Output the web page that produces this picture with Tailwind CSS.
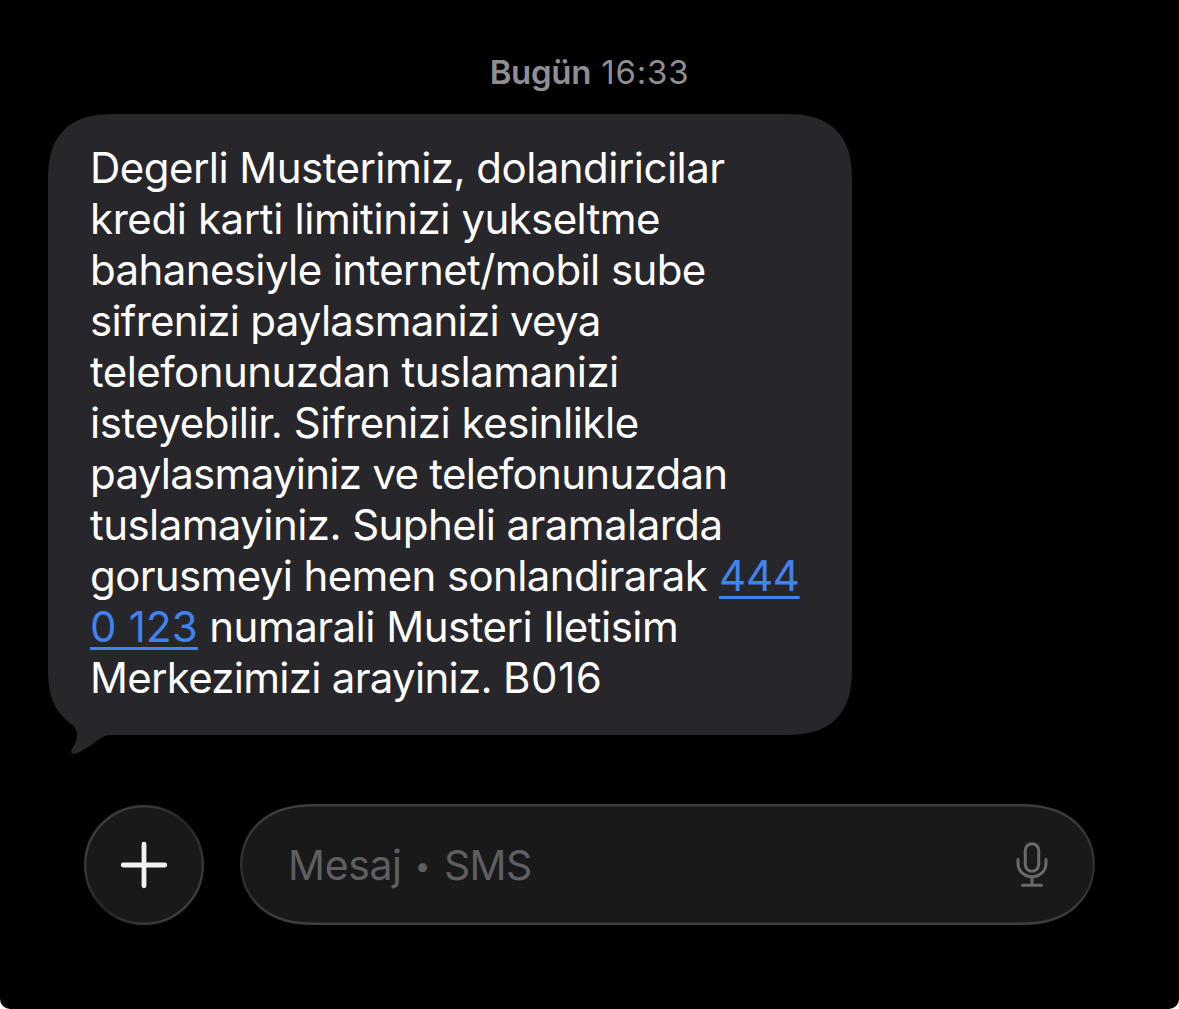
<!DOCTYPE html>
<html lang="tr">
<head>
    <meta charset="UTF-8">
    <meta name="viewport" content="width=device-width, initial-scale=1.0">
    <title>Mesajlar</title>
    <script src="https://cdn.jsdelivr.net/npm/@tailwindcss/browser@4"></script>
</head>
<body class="bg-white font-['Inter',sans-serif]">

    <div class="bg-black w-[1179px] h-[1009px] rounded-b-[10px] overflow-hidden flex flex-col">

        <!-- Date header -->
        <p class="mt-[51px] h-[43px] leading-[42px] text-[33px] text-[#8e8e93] flex justify-center gap-[10px] whitespace-nowrap">
            <span class="font-semibold tracking-[-0.3px]">Bugün</span>
            <span class="tracking-[0.8px]">16:33</span>
        </p>

        <!-- Message bubble -->
        <div class="relative ml-12 mt-5 w-[804px] h-[621px] pt-7 pl-[42px]">
            <svg class="absolute left-0 top-0" width="804" height="642" viewBox="0 0 804 642" fill="#27262b">
                <path d="M66 0H738C760 0 776 4 788 16C800 28 804 44 804 66V555C804 577 800 593 788 605C776 617 760 621 738 621H63C56 621 50 626 44 630.5C37 635 31 639 26 640C23 640 22 637 24 635C29 628 32 618 24.5 611C7 598 0 584 0 555V66C0 44 4 28 16 16C28 4 44 0 66 0Z"/>
            </svg>
            <div class="relative text-[42px] leading-[51px] text-white whitespace-nowrap">
                <p class="tracking-[-0.54px]">Degerli Musterimiz, dolandiricilar</p>
                <p><span class="tracking-[-0.4px]">kredi karti limitinizi </span><span class="tracking-[-0.6px]">yukseltme</span></p>
                <p class="tracking-[-0.61px]">bahanesiyle internet/mobil sube</p>
                <p class="tracking-[-0.74px]">sifrenizi paylasmanizi veya</p>
                <p class="tracking-[-0.55px]">telefonunuzdan tuslamanizi</p>
                <p class="tracking-[-0.47px]">isteyebilir. Sifrenizi kesinlikle</p>
                <p class="tracking-[-0.71px]">paylasmayiniz ve telefonunuzdan</p>
                <p class="tracking-[-0.57px]">tuslamayiniz. Supheli aramalarda</p>
                <p><span class="tracking-[-0.63px]">gorusmeyi hemen sonlandirarak</span> <a class="text-[#3f83f0] tracking-[-0.3px] underline decoration-[3px] underline-offset-[5px]">444</a></p>
                <p><a class="text-[#3f83f0] tracking-[0.2px] underline decoration-[3px] underline-offset-[5px]">0 123</a><span class="tracking-[-0.51px]"> numarali Musteri Iletisim</span></p>
                <p><span class="tracking-[-0.71px]">Merkezimizi arayiniz. </span><span class="tracking-[0.6px]">B016</span></p>
            </div>
        </div>

        <!-- Compose bar -->
        <div class="mt-[69px] ml-[84px] flex gap-9">
            <button class="mt-px w-[120px] h-[120px]">
                <svg width="120" height="120" viewBox="0 0 120 120" fill="none">
                    <defs>
                        <linearGradient id="ring" x1="0" y1="0" x2="1" y2="1">
                            <stop offset="0" stop-color="#474747"/>
                            <stop offset="0.5" stop-color="#262626"/>
                            <stop offset="1" stop-color="#474747"/>
                        </linearGradient>
                    </defs>
                    <circle cx="60" cy="60" r="58.8" fill="#191919" stroke="url(#ring)" stroke-width="2.4"/>
                    <path d="M60 39.2V80.8M39.2 60H80.8" stroke="#f2f2f2" stroke-width="4.8" stroke-linecap="round"/>
                </svg>
            </button>
            <div class="relative w-[855px] h-[121px] pl-12 pr-[47px] flex items-center justify-between">
                <svg class="absolute left-0 top-0" width="855" height="121" viewBox="0 0 855 121">
                    <defs>
                        <linearGradient id="edge" x1="0" y1="0" x2="0.02" y2="1">
                            <stop offset="0" stop-color="#3e3e3e"/>
                            <stop offset="0.6" stop-color="#2e2e2e"/>
                            <stop offset="1" stop-color="#3e3e3e"/>
                        </linearGradient>
                    </defs>
                    <path d="M74 1.2H781C801 1.2 817 4.5 830.5 14.5C845.5 25.5 853.8 42 853.8 60.5C853.8 79 845.5 95.5 830.5 106.5C817 116.5 801 119.8 781 119.8H74C54 119.8 38 116.5 24.5 106.5C9.5 95.5 1.2 79 1.2 60.5C1.2 42 9.5 25.5 24.5 14.5C38 4.5 54 1.2 74 1.2Z" fill="#191919" stroke="url(#edge)" stroke-width="2.4"/>
                </svg>
                <div class="relative mt-[3px] flex text-[41px] leading-[51px] text-[#5f5f62] whitespace-nowrap">
                    <span class="w-[113px] tracking-[-0.4px]">Mesaj</span>
                    <span class="w-[43px] text-center pt-px text-[28px]">•</span>
                    <span class="tracking-[-0.7px]">SMS</span>
                </div>
                <svg class="relative mt-px" width="32" height="46" viewBox="0 0 32 46" fill="none" stroke="#6a6a6d" stroke-width="3" stroke-linecap="round">
                    <rect x="9.3" y="1.7" width="13.4" height="27.6" rx="6.7"/>
                    <path d="M2 17.5V21.5A14 13.2 0 0 0 30 21.5V17.5M16 35V43M6.5 43.3H25.5"/>
                </svg>
            </div>
        </div>
    </div>
</body>
</html>
